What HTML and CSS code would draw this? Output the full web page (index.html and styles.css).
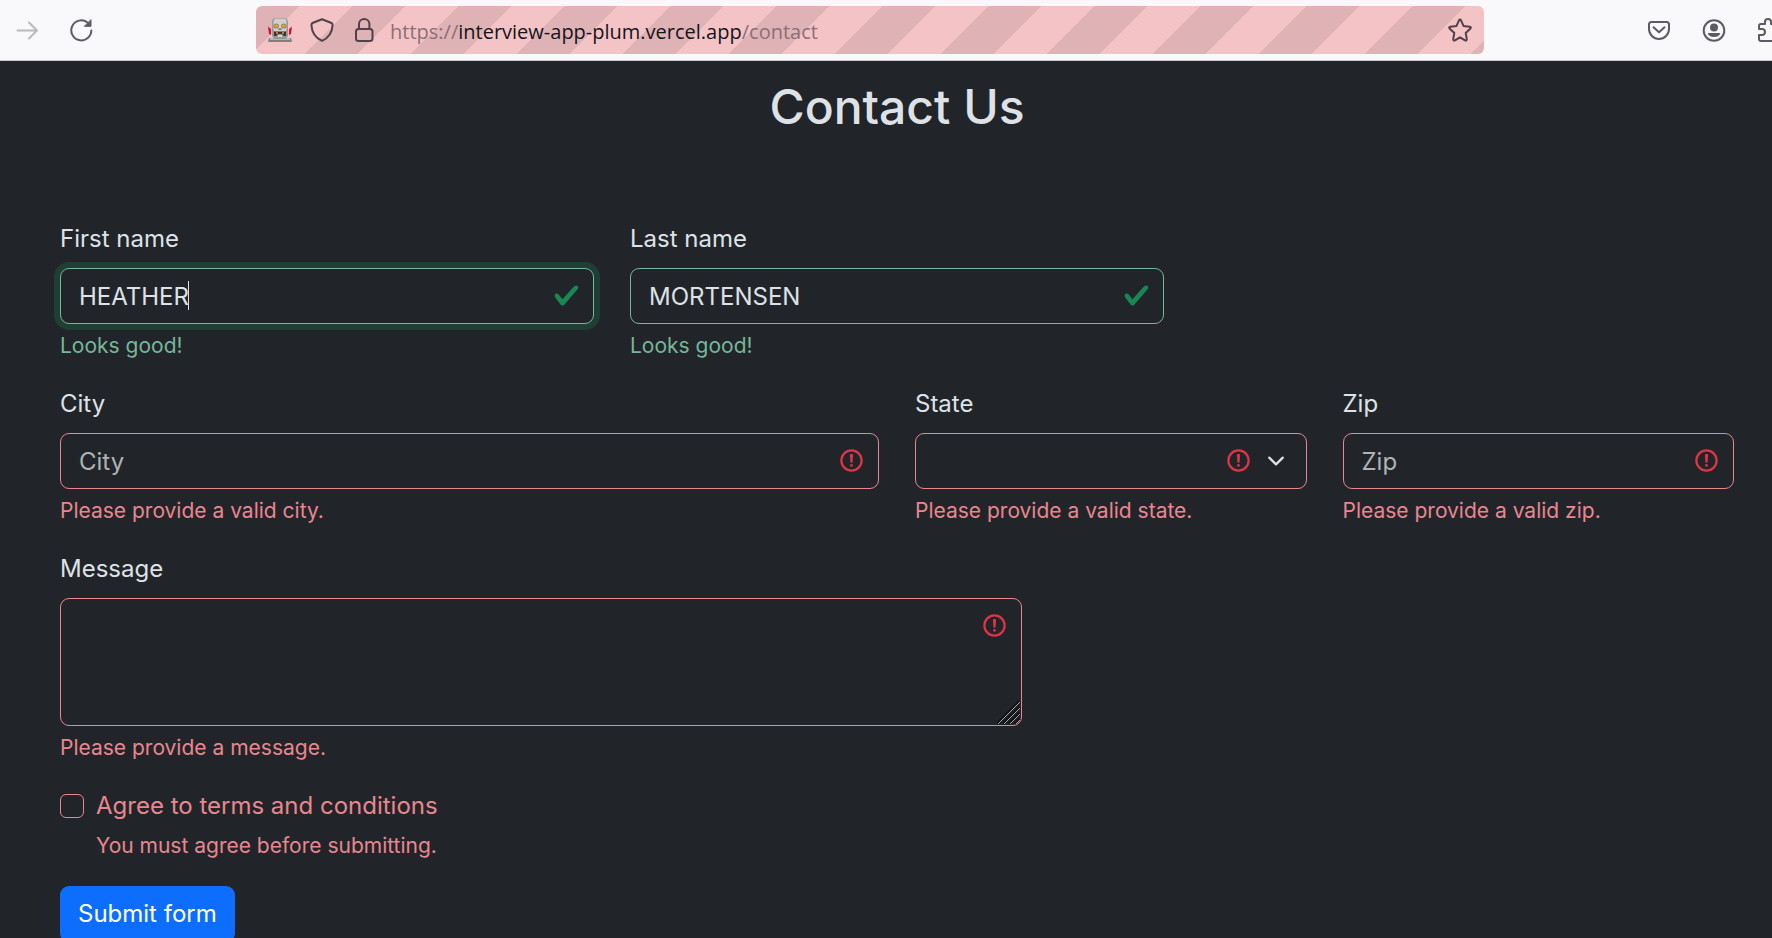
FILE: index.html
```html
<!DOCTYPE html>
<html lang="en">
<head>
<meta charset="utf-8">
<meta name="viewport" content="width=device-width, initial-scale=1">
<title>Contact Us</title>
<link rel="stylesheet" href="styles.css">
</head>
<body>
<svg class="sprite" aria-hidden="true">
  <symbol id="valid" viewBox="0 0 8 8"><path fill="#198754" d="M2.3 6.73.6 4.53c-.4-1.04.46-1.4 1.1-.8l1.1 1.4 3.4-3.8c.6-.63 1.6-.27 1.2.7l-4 4.6c-.43.5-.8.4-1.1.1z"/></symbol>
  <symbol id="invalid" viewBox="0 0 12 12"><g fill="none" stroke="#dc3545"><circle cx="6" cy="6" r="4.5"/><path stroke-linejoin="round" d="M5.8 3.6h.4L6 6.5z"/><circle cx="6" cy="8.2" r=".6" fill="#dc3545" stroke="none"/></g></symbol>
  <symbol id="chevron" viewBox="0 0 16 16"><path fill="none" stroke="#dee2e6" stroke-linecap="round" stroke-linejoin="round" stroke-width="2" d="m2 5 6 6 6-6"/></symbol>
</svg>
<div class="window">
  <header class="toolbar">
    <nav class="toolbar-nav" aria-label="Browser navigation">
      <button class="tool" type="button" aria-label="Forward" disabled>
        <svg viewBox="0 0 24 24" fill="none" stroke="#b9b9bd" stroke-width="2" stroke-linecap="round" stroke-linejoin="round"><path d="M2.500 12.500H22M14 4.500l8 8-8 8"/></svg>
      </button>
      <button class="tool" type="button" aria-label="Reload">
        <svg viewBox="0 0 24 24" fill="none" stroke="#5b5b66" stroke-width="2" stroke-linecap="round"><path d="M22.300 12.500A10 10 0 1 1 18.500 4.500"/><path d="M22 2v6.300h-6.300z" fill="#5b5b66" stroke-width="1" stroke-linejoin="round"/></svg>
      </button>
    </nav>
    <div class="urlbar">
      <div class="identity">
        <svg class="tool-icon" viewBox="0 0 24 24" role="img" aria-label="Browser under remote control">
          <path d="M0 8.500l3 2.500v6l-2-1zM24 8.500l-3 2.500v6l2-1z" fill="#d8102c"/>
          <path d="M1 20h22l1 4H0z" fill="#7f7f7d"/><path d="M2 20h20v2H2z" fill="#b5b5b2"/>
          <path d="M4 4l1-3.500h14L20 4v14l-2 3H6l-2-3z" fill="#979795"/>
          <path d="M5.500 3l1-2h11l1 2v9l-1.500 2H7l-1.500-2z" fill="#cfcfcc"/>
          <circle cx="8.300" cy="8" r="2.600" fill="#8c8377"/><circle cx="15.700" cy="8" r="2.600" fill="#8c8377"/>
          <circle cx="8.300" cy="8" r="1.700" fill="#f29a16"/><circle cx="15.700" cy="8" r="1.700" fill="#f29a16"/>
          <path d="M11 10h2l1 2h-4z" fill="#85857f"/>
          <path d="M6 13.500h12V18h-2l-2-2h-4l-2 2H6z" fill="#353535"/><path d="M8 14h2v2H8zM14 14h2v2h-2z" fill="#e56d19"/><path d="M10 17h4v2h-4z" fill="#d2d2cf"/>
        </svg>
        <svg class="tool-icon" viewBox="0 0 24 24" fill="none" stroke="#50414b" stroke-width="2" stroke-linejoin="round"><path d="M12 1.300 21.500 5q1.200.6 1.100 2C22.200 14 18.500 20 12 22.800 5.500 20 1.800 14 1.400 7q0-1.400 1.100-2z"/></svg>
        <svg class="tool-icon" viewBox="0 0 24 24" fill="none" stroke="#50414b" stroke-width="2"><rect x="4" y="11" width="16.500" height="12" rx="2.500"/><path d="M7 11V6a5.200 5 0 0 1 10.400 0v5"/></svg>
      </div>
      <span class="url">https://<span class="url-host">interview-app-plum.vercel.app</span>/contact</span>
      <button class="tool" type="button" aria-label="Bookmark this page">
        <svg viewBox="0 0 24 24" fill="none" stroke="#50414b" stroke-width="2" stroke-linejoin="round"><path d="M11 2.300q1-1.800 2 0l2.500 5.600 6.200.8q2 .5.500 2L17.700 15l1.100 6.100q0 1.900-1.700 1.200L12 19.300l-5.100 3q-1.700.7-1.700-1.200L6.300 15 1.800 10.700q-1.500-1.500.5-2l6.200-.8z"/></svg>
      </button>
    </div>
    <div class="toolbar-end">
      <button class="tool" type="button" aria-label="Save to Pocket">
        <svg viewBox="0 0 24 24" fill="none" stroke="#5b5b66" stroke-width="2" stroke-linecap="round" stroke-linejoin="round"><path d="M4.500 4h15q2.500 0 2.500 2.500V11a10 10 0 0 1-20 0V6.500Q2 4 4.500 4z"/><path d="m6.500 9.300 5.500 5 5.500-5"/></svg>
      </button>
      <button class="tool" type="button" aria-label="Account">
        <svg viewBox="0 0 24 24"><circle cx="12" cy="12.500" r="10.300" fill="none" stroke="#5b5b66" stroke-width="2"/><circle cx="12" cy="9.500" r="4" fill="#5b5b66"/><path d="M6.500 15h11q1 0 .6 1a6.500 4.500 0 0 1-12.200 0q-.4-1 .6-1z" fill="#5b5b66"/></svg>
      </button>
      <button class="tool" type="button" aria-label="Extensions">
        <svg viewBox="0 0 24 24" fill="none" stroke="#5b5b66" stroke-width="2" stroke-linejoin="round"><path d="M8 6V4a3 3 0 0 1 6 0v2h5q1.500 0 1.500 1.500V23H4q-2 0-2-2v-4h3a3 3 0 0 0 0-6H2V8q0-2 2-2z"/></svg>
      </button>
    </div>
  </header>

  <main class="page">
    <h1 class="title">Contact Us</h1>
    <form class="form" novalidate>
      <div class="group span-4">
        <label class="label" for="first">First name</label>
        <div class="field">
          <input class="control is-valid is-focused" id="first" type="text" value="HEATHER">
          <span class="caret"></span>
          <svg class="mark"><use href="#valid"/></svg>
        </div>
        <p class="feedback good">Looks good!</p>
      </div>
      <div class="group span-4">
        <label class="label" for="last">Last name</label>
        <div class="field">
          <input class="control is-valid" id="last" type="text" value="MORTENSEN">
          <svg class="mark"><use href="#valid"/></svg>
        </div>
        <p class="feedback good">Looks good!</p>
      </div>
      <div class="group span-6 row-start">
        <label class="label" for="city">City</label>
        <div class="field">
          <input class="control" id="city" type="text" placeholder="City">
          <svg class="mark"><use href="#invalid"/></svg>
        </div>
        <p class="feedback">Please provide a valid city.</p>
      </div>
      <div class="group span-3">
        <label class="label" for="state">State</label>
        <div class="field">
          <select class="control" id="state"><option value=""></option></select>
          <svg class="mark mark-select"><use href="#invalid"/></svg>
          <svg class="arrow"><use href="#chevron"/></svg>
        </div>
        <p class="feedback">Please provide a valid state.</p>
      </div>
      <div class="group span-3">
        <label class="label" for="zip">Zip</label>
        <div class="field">
          <input class="control" id="zip" type="text" placeholder="Zip">
          <svg class="mark"><use href="#invalid"/></svg>
        </div>
        <p class="feedback">Please provide a valid zip.</p>
      </div>
      <div class="group span-7 row-start">
        <label class="label" for="message">Message</label>
        <div class="field">
          <textarea class="control message" id="message"></textarea>
          <svg class="mark"><use href="#invalid"/></svg>
          <svg class="grip" viewBox="0 0 24 24"><path d="M0 23 23 0M6 23 23 6M12 23 23 12M18 23l5-5" stroke="#111316" stroke-width="3"/><path d="M1 23 23 1M7 23 23 7M13 23l10-10M19 23l4-4" stroke="#a9a9aa"/></svg>
        </div>
        <p class="feedback">Please provide a message.</p>
      </div>
      <div class="group span-12">
        <div class="check">
          <input class="checkbox" id="terms" type="checkbox">
          <label class="check-label" for="terms">Agree to terms and conditions</label>
        </div>
        <p class="feedback check-feedback">You must agree before submitting.</p>
      </div>
      <div class="group span-12">
        <button class="submit" type="submit">Submit form</button>
      </div>
    </form>
  </main>
</div>
</body>
</html>
```
FILE: styles.css
```css
*, *::before, *::after { box-sizing: border-box; }

body {
  margin: 0;
  background: #212529;
  color: #dee2e6;
  font: 400 24px/36px Inter, "Liberation Sans", sans-serif;
}

.sprite { display: none; }

.window {
  display: flex;
  flex-direction: column;
  height: 100vh;
  overflow: hidden;
}

/* Browser toolbar */
.toolbar {
  display: flex;
  flex: none;
  align-items: center;
  padding: 6px 0;
  background: #f9f9fb;
  border-bottom: 1px solid #c9c9cc;
  overflow: hidden;
}

.toolbar-nav,
.toolbar-end {
  display: flex;
  flex: none;
}

.toolbar-nav {
  gap: 30px;
  width: 256px;
  padding-left: 15px;
}

.toolbar-end {
  gap: 31px;
  width: 288px;
  padding-left: 163px;
}

.tool {
  flex: none;
  width: 24px;
  height: 24px;
  padding: 0;
  border: 0;
  background: none;
}

.tool svg,
.tool-icon {
  display: block;
  flex: none;
  width: 24px;
  height: 24px;
}

.urlbar {
  display: flex;
  flex: 1;
  align-items: center;
  gap: 14px;
  min-width: 0;
  height: 48px;
  padding: 0 12px;
  border-radius: 6px;
  background: linear-gradient(135deg, #dfb2b5 25%, #f4c3c6 25% 50%, #dfb2b5 50% 75%, #f4c3c6 75%) -9px 0 / 106px 106px;
}

.identity {
  display: flex;
  flex: none;
  gap: 18px;
}

.url {
  flex: 1;
  padding-top: 3px;
  overflow: hidden;
  color: #8b6f77;
  font: 20px/32px "Open Sans", "Noto Sans", sans-serif;
  white-space: nowrap;
}

.url-host { color: #15141a; }

/* Contact page */
.page {
  flex: 1;
  min-height: 0;
  padding: 17px 38px 0 60px;
  overflow: hidden;
}

.title {
  margin: 0 0 85px;
  font-size: 48px;
  font-weight: 500;
  line-height: 58px;
  text-align: center;
}

.form {
  display: grid;
  grid-template-columns: repeat(12, minmax(0, 1fr));
  gap: 24px 36px;
}

.span-3 { grid-column-end: span 3; }
.span-4 { grid-column-end: span 4; }
.span-6 { grid-column-end: span 6; }
.span-7 { grid-column-end: span 7; }
.span-12 { grid-column-end: span 12; }
.row-start { grid-column-start: 1; }

.label {
  display: block;
  margin-bottom: 11px;
}

.field {
  position: relative;
  display: flex;
}

.control {
  width: 100%;
  height: 56px;
  margin: 0;
  padding: 9px 54px 9px 18px;
  border: 1px solid #ea868f;
  border-radius: 9px;
  outline: 0;
  appearance: none;
  background: #212529;
  color: #dee2e6;
  font: inherit;
}

.control::placeholder {
  color: #afb3b6;
  opacity: 1;
}

.is-valid { border-color: #75b798; }
.is-focused { box-shadow: 0 0 0 6px #1f3e34; }

.message {
  height: 128px;
  resize: none;
}

.mark {
  position: absolute;
  top: 14px;
  right: 14px;
  width: 27px;
  height: 27px;
  pointer-events: none;
}

.mark-select { right: 55px; }

.arrow {
  position: absolute;
  top: 19px;
  right: 22px;
  width: 18px;
  height: 18px;
  pointer-events: none;
}

.caret {
  position: absolute;
  top: 13px;
  left: 128px;
  width: 1px;
  height: 29px;
  background: #dee2e6;
}

.grip {
  position: absolute;
  right: 1px;
  bottom: 1px;
  width: 24px;
  height: 24px;
  border-bottom-right-radius: 8px;
  pointer-events: none;
}

.feedback {
  margin: 6px 0 0;
  color: #ea868f;
  font-size: 21px;
  line-height: 32px;
}

.good { color: #75b798; }

.check {
  display: flex;
  align-items: center;
  gap: 12px;
}

.checkbox {
  width: 24px;
  height: 24px;
  margin: 0;
  border: 1px solid #ea868f;
  border-radius: 6px;
  appearance: none;
}

.check-label { color: #ea868f; }
.check-feedback { padding-left: 36px; }

.submit {
  padding: 10px 18px;
  border: 0;
  border-radius: 9px;
  background: #0d6efd;
  color: #fff;
  font: inherit;
}
```
